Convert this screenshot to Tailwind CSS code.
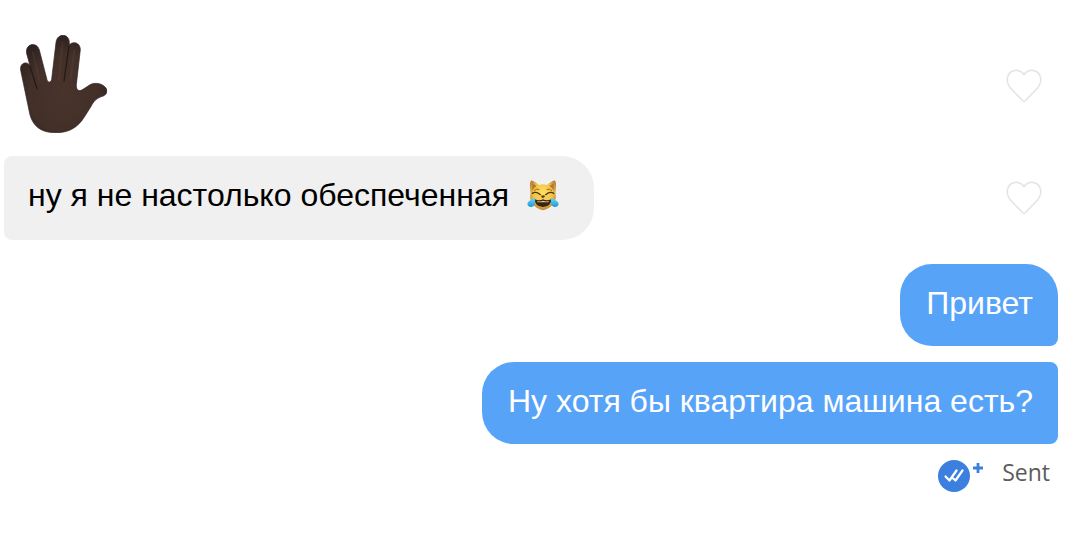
<!DOCTYPE html>
<html lang="ru">
<head>
<meta charset="utf-8">
<meta name="viewport" content="width=device-width, initial-scale=1">
<title>Chat</title>
<script src="https://cdn.jsdelivr.net/npm/@tailwindcss/browser@4"></script>
</head>
<body class="bg-white font-['Liberation_Sans',Arial,sans-serif] text-[32px] leading-10 text-black">
<main class="flex flex-col pt-[35px] pr-5 pl-1">
  <!-- Incoming emoji message -->
  <article class="flex items-center justify-between pr-4 pl-4">
    <svg class="h-[98px] w-[87px]" viewBox="60 46 261 294" role="img" aria-label="🖖🏿">
      <defs>
        <radialGradient id="skin" cx="50%" cy="60%" r="62%">
          <stop offset="0" stop-color="#49342b"/><stop offset=".65" stop-color="#412f28"/><stop offset="1" stop-color="#2c2020"/>
        </radialGradient>
      </defs>
      <path fill="url(#skin)" stroke="#30221f" stroke-width="2" d="M62 152C58 127 84 124 90 138L80 102C74 72 110 64 118 91L141 180C144 190 152 190 155 179L168 68C172 39 208 40 208 69L208 76C218 63 241 68 241 90L229 195C228 214 238 216 249 209L272 194C287 188 305 191 316 203C325 212 321 224 310 229C289 235 281 245 272 262L253 292C234 323 207 339 169 339C117 340 94 314 87 272Z"/>
      <path fill="none" stroke="#241a19" stroke-width="4" stroke-linecap="round" d="M90 140L111 207M207 80L192 184"/>
      <path fill="none" stroke="#5e4538" stroke-width="7" stroke-linecap="round" opacity=".3" d="M99 100L119 185M187 70L176 180M223 93L211 180"/>
    </svg>
    <button type="button" aria-label="Нравится" class="mt-1 text-[#e4e4e4]">
      <svg class="h-[34px] w-9" viewBox="0 0 36 34" fill="none" stroke="currentColor" stroke-width="1.6" stroke-linejoin="round"><path d="M18 5.500C15 1 9 .2 5 3C.2 6.500.2 14 4 18.500L16.500 31.500Q18 33 19.500 31.500L32 18.500C35.800 14 35.800 6.500 31 3C27 .2 21 1 18 5.500Z"/></svg>
    </button>
  </article>
  <!-- Incoming text message -->
  <article class="mt-[23px] flex items-center justify-between pr-4">
    <p class="flex rounded-l-lg rounded-r-[32px] bg-[#f0f0f0] pt-[19px] pr-[35px] pb-[25px] pl-6">
      <span>ну я не настолько обеспеченная</span>
      <svg class="ml-[18px] mt-1 h-8 w-8 shrink-0" viewBox="0 0 96 96" role="img" aria-label="😹">
        <defs>
          <radialGradient id="fur" cx="50%" cy="42%" r="58%"><stop offset="0" stop-color="#ffe163"/><stop offset=".65" stop-color="#f0c246"/><stop offset="1" stop-color="#b98230"/></radialGradient>
          <linearGradient id="tear" x2="0" y2="1"><stop stop-color="#7dd9f8"/><stop offset="1" stop-color="#199bd8"/></linearGradient>
        </defs>
        <path fill="url(#fur)" d="M12 5C17 3 29 13 36 18Q48 14 60 18C67 13 79 3 84 5C89 10 87 32 85 41C92 65 76 86 48 94C20 86 4 65 11 41C9 32 7 10 12 5Z"/>
        <path fill="#b27a40" d="M15 12L29 21Q20 27 16 35ZM81 12L67 21Q76 27 80 35Z"/>
        <path fill="none" stroke="#54340d" stroke-width="4" stroke-linecap="round" d="M16 43Q27 36 40 47M56 47Q69 36 80 43"/>
        <path fill="none" stroke="#9d681f" stroke-width="3" stroke-linecap="round" d="M22 34Q29 28 36 31M60 31Q67 28 74 34"/>
        <path fill="#704017" d="M42 50Q48 47 54 50Q54 55 48 58Q42 55 42 50Z"/>
        <path fill="#3b2410" d="M22 60Q36 67 48 61Q60 67 74 60Q72 83 48 84Q24 83 22 60Z"/>
        <path fill="#d9c9a8" d="M30 66Q39 69 48 65Q57 69 66 66L64 70H32Z"/>
        <path fill="url(#tear)" d="M23 54C25 66 27 82 14 84C2 85-2 74 4 68C10 63 18 61 23 54ZM73 54C71 66 69 82 82 84C94 85 98 74 92 68C86 63 78 61 73 54Z"/>
      </svg>
    </p>
    <button type="button" aria-label="Нравится" class="text-[#e4e4e4]">
      <svg class="h-[34px] w-9" viewBox="0 0 36 34" fill="none" stroke="currentColor" stroke-width="1.6" stroke-linejoin="round"><path d="M18 5.500C15 1 9 .2 5 3C.2 6.500.2 14 4 18.500L16.500 31.500Q18 33 19.500 31.500L32 18.500C35.800 14 35.800 6.500 31 3C27 .2 21 1 18 5.500Z"/></svg>
    </button>
  </article>
  <!-- Outgoing messages -->
  <p class="mt-6 self-end rounded-[32px] rounded-br-lg bg-[#57a3f8] pt-[19px] pr-[25px] pb-[23px] pl-[26px] text-white">Привет</p>
  <p class="mt-4 self-end rounded-l-[32px] rounded-r-lg bg-[#57a3f8] pt-[19px] pr-[25px] pb-[23px] pl-[26px] text-white">Ну хотя бы квартира машина есть?</p>
  <!-- Delivery status -->
  <footer class="mt-4 flex items-start self-end pr-2">
    <svg class="h-8 w-12" viewBox="0 0 48 32" aria-hidden="true">
      <circle cx="16" cy="16" r="16" fill="#3b80df"/>
      <path fill="none" stroke="#fff" stroke-width="2.200" stroke-linecap="round" stroke-linejoin="round" d="M7.500 16.500L11.500 20.500L18.500 10.500M14 17.500L17.500 20.500L24.500 10.500"/>
      <path stroke="#3b80df" stroke-width="2.800" d="M40 3V13M35 8H45"/>
    </svg>
    <span class="ml-4 font-['Open_Sans',sans-serif] text-[23px] leading-6 text-[#5c5c5c]">Sent</span>
  </footer>
</main>
</body>
</html>
